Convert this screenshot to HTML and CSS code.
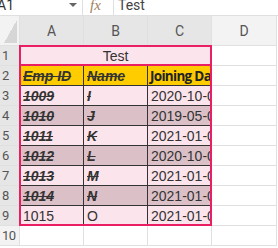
FILE: index.html
```html
<!DOCTYPE html>
<html>
<head>
<meta charset="utf-8">
<link rel="stylesheet" href="styles.css">
</head>
<body>
<div class="fbar">
  <div class="namebox"><span class="ref">A1</span><span class="caret"></span></div>
  <div class="fx">fx</div>
  <div class="formula">Test</div>
</div>
<div class="stack">
<div class="sheet">
  <div class="corner"><span class="tri"></span></div>
  <div class="colh sel">A</div>
  <div class="colh sel">B</div>
  <div class="colh sel">C</div>
  <div class="colh">D</div>

  <div class="rowh sel">1</div>
  <div class="cell title">Test</div>
  <div class="cell"></div>

  <div class="rowh sel">2</div>
  <div class="cell hd ds">Emp ID</div>
  <div class="cell hd ds">Name</div>
  <div class="cell hd bold">Joining Da</div>
  <div class="cell"></div>

  <div class="rowh sel">3</div>
  <div class="cell lt ds">1009</div>
  <div class="cell lt ds">I</div>
  <div class="cell lt">2020-10-0</div>
  <div class="cell"></div>

  <div class="rowh sel">4</div>
  <div class="cell dk ds">1010</div>
  <div class="cell dk ds">J</div>
  <div class="cell dk">2019-05-0</div>
  <div class="cell"></div>

  <div class="rowh sel">5</div>
  <div class="cell lt ds">1011</div>
  <div class="cell lt ds">K</div>
  <div class="cell lt">2021-01-0</div>
  <div class="cell"></div>

  <div class="rowh sel">6</div>
  <div class="cell dk ds">1012</div>
  <div class="cell dk ds">L</div>
  <div class="cell dk">2020-10-0</div>
  <div class="cell"></div>

  <div class="rowh sel">7</div>
  <div class="cell lt ds">1013</div>
  <div class="cell lt ds">M</div>
  <div class="cell lt">2021-01-0</div>
  <div class="cell"></div>

  <div class="rowh sel">8</div>
  <div class="cell dk ds">1014</div>
  <div class="cell dk ds">N</div>
  <div class="cell dk">2021-01-0</div>
  <div class="cell"></div>

  <div class="rowh sel">9</div>
  <div class="cell lt">1015</div>
  <div class="cell lt">O</div>
  <div class="cell lt">2021-01-0</div>
  <div class="cell"></div>

  <div class="rowh">10</div>
  <div class="cell"></div>
  <div class="cell"></div>
  <div class="cell"></div>
  <div class="cell"></div>
</div>
<div class="overlay">
  <div class="box1"></div>
  <div class="box2"></div>
</div>
</div>
</body>
</html>
```
FILE: styles.css
```css
html, body {
  margin: 0;
  padding: 0;
  background: #fff;
  overflow: hidden;
}
body {
  font-family: "Liberation Sans", Arial, sans-serif;
  color: #333;
}
.fbar {
  display: flex;
  height: 16px;
  box-sizing: border-box;
  border-bottom: 1px solid #e0e0e0;
  font-family: Roboto, "Liberation Sans", sans-serif;
  font-size: 14px;
  line-height: 15px;
  overflow: hidden;
}
.namebox {
  width: 83px;
  box-sizing: border-box;
  border-right: 1px solid #e0e0e0;
  display: flex;
  justify-content: space-between;
  align-items: flex-start;
  padding-right: 5px;
}
.ref {
  margin-left: -3px;
  margin-top: -2px;
  color: #333;
}
.caret {
  width: 0;
  height: 0;
  border-left: 4px solid transparent;
  border-right: 4px solid transparent;
  border-top: 4px solid #666;
  margin-top: 3px;
}
.fx {
  width: 31px;
  box-sizing: border-box;
  border-right: 1px solid #e0e0e0;
  font-family: "Liberation Serif", serif;
  font-style: italic;
  font-size: 15px;
  color: #a08060;
  padding-left: 7px;
  margin-top: -2px;
}
.formula {
  padding-left: 4px;
  margin-top: -2px;
  color: #444;
}
.stack {
  display: grid;
}
.sheet, .overlay {
  grid-area: 1 / 1;
  display: grid;
  grid-template-columns: 20px 64px 64px 64px 65px;
  grid-template-rows: 30px repeat(10, 20px);
}
.overlay {
  pointer-events: none;
}
.sheet > div {
  box-sizing: border-box;
  border-right: 1px solid #e0e0e0;
  border-bottom: 1px solid #e0e0e0;
  overflow: hidden;
  white-space: nowrap;
}
.corner {
  background: #f3f3f3;
  padding: 4px 2px 2px 4px;
}
.tri {
  display: block;
  width: 100%;
  height: 100%;
  background: linear-gradient(to bottom right, transparent 50%, #d6d6d6 50%);
}
.colh {
  background: #f3f3f3;
  font-family: Roboto, sans-serif;
  font-size: 14px;
  color: #555;
  display: flex;
  align-items: center;
  justify-content: center;
  padding-top: 1px;
}
.colh.sel, .rowh.sel {
  background: #e6e6e6;
}
.rowh {
  background: #f3f3f3;
  font-family: Roboto, sans-serif;
  font-size: 13px;
  color: #555;
  display: flex;
  align-items: center;
  padding-left: 2px;
  letter-spacing: -0.5px;
}
.cell {
  font-size: 14px;
  line-height: 20px;
  padding-left: 3px;
  color: #333;
}
.title {
  grid-column: span 3;
  background: #fce4ec;
  text-align: center;
  padding-left: 0;
}
.sheet > .hd, .sheet > .lt, .sheet > .dk {
  border-right-color: #333;
  border-bottom-color: #333;
}
.hd {
  background: #ffcc00;
}
.lt {
  background: #fce4ec;
}
.dk {
  background: #dbc0c7;
}
.ds {
  font-weight: bold;
  font-style: italic;
  text-decoration: line-through;
}
.bold {
  font-weight: 700;
  font-family: "Open Sans", sans-serif;
  font-size: 13.5px;
  letter-spacing: -0.7px;
  padding-left: 2px;
  color: #222;
}
.box1, .box2 {
  box-sizing: border-box;
  border: 2px solid #e91e63;
  margin: -1px 0 0 -1px;
}
.box1 {
  grid-column: 2 / 5;
  grid-row: 2;
}
.box2 {
  grid-column: 2 / 5;
  grid-row: 3 / 11;
  border-top: 0;
  margin-top: 0;
}
```
